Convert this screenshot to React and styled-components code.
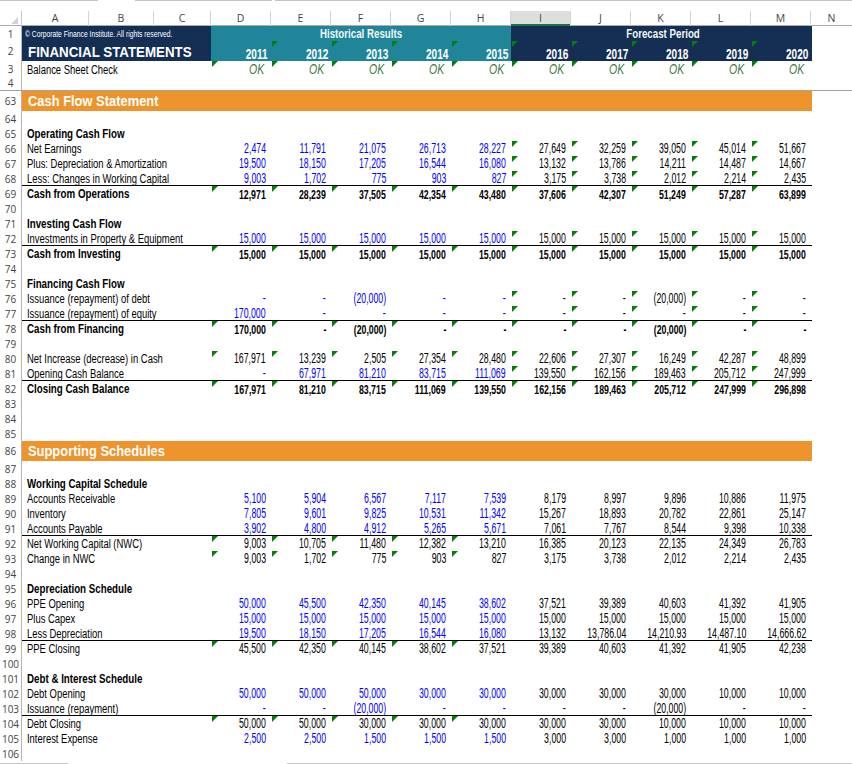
import React from 'react';
import styled, { createGlobalStyle } from 'styled-components';

const Global = createGlobalStyle`
  html, body { margin: 0; padding: 0; background: #fff; }
  body { font-family: "Liberation Sans", Arial, sans-serif; color: #000; overflow: hidden; }
`;

const NAVY = '#142e54';
const TEAL = '#21859a';
const ORANGE = '#ee942c';

const Sheet = styled.div`
  width: 852px;
  height: 764px;
  overflow: hidden;
  display: flex;
  flex-direction: column;
`;
const TopStrip = styled.div`
  height: 11px;
  display: flex;
  align-items: flex-start;
`;
const Tab = styled.div`
  height: 1px;
  background: #c4c4c4;
  width: ${p => p.$w}px;
  margin-left: ${p => p.$gap || 0}px;
`;
const BottomStrip = styled.div`
  height: 3px;
  display: flex;
  align-items: flex-end;
`;
const ColHeader = styled.div`
  height: 15px;
  display: grid;
  grid-template-columns: 22px 67px 65px 57px repeat(10, 60px) 41px;
  border-bottom: 1px solid #ababab;
  box-sizing: border-box;
`;
const Corner = styled.div`
  border-right: 1px solid #c6c6c6;
  display: flex;
  align-items: flex-end;
  justify-content: flex-end;
  padding: 0 3px 2px 0;
`;
const ColCell = styled.div`
  border-right: ${p => (p.$last ? 'none' : '1px solid #d4d4d4')};
  font: 10.5px "Open Sans", sans-serif;
  line-height: 15px;
  color: #444;
  text-align: center;
  background: ${p => (p.$active ? '#dedede' : 'transparent')};
  box-shadow: ${p => (p.$active ? 'inset 0 -2px 0 #217346' : 'none')};
`;
const Row = styled.div`
  display: flex;
  height: ${p => p.$h || 15}px;
  flex: none;
  box-sizing: border-box;
  border-bottom: ${p => (p.$frozen ? '1px solid #a2a2a2' : 'none')};
`;
const RowNum = styled.div`
  width: 22px;
  flex: none;
  box-sizing: border-box;
  border-right: 1px solid #b4b4b4;
  font: 10px "Open Sans", sans-serif;
  color: #444;
  text-align: center;
  display: flex;
  align-items: center;
  justify-content: center;
`;
const Body = styled.div`
  width: 790px;
  flex: none;
  box-sizing: border-box;
  display: grid;
  grid-template-columns: 189px repeat(10, 60px) 1px;
  background: ${p => p.$bg || 'transparent'};
  box-shadow: ${p => (p.$rule ? 'inset 0 -1px 0 #000' : 'none')};
`;
const LabelCell = styled.div`
  position: relative;
  padding-left: ${p => p.$pad || 5}px;
  display: flex;
  align-items: center;
  background: ${p => p.$bg || 'transparent'};
  white-space: nowrap;
`;
const ValueCell = styled.div`
  position: relative;
  display: flex;
  justify-content: flex-end;
  align-items: center;
  padding-right: ${p => p.$pad || 5}px;
  background: ${p => p.$bg || 'transparent'};
  white-space: nowrap;
`;
const BandCell = styled.div`
  grid-column: span 5;
  background: ${p => p.$bg};
  display: flex;
  align-items: center;
  justify-content: center;
  padding-left: ${p => p.$shift || 0}px;
  box-sizing: border-box;
`;
const Squeeze = styled.span`
  display: inline-block;
  transform: scaleX(var(--sx));
`;
const LabelText = styled(Squeeze)`
  --sx: ${p => (p.$bold ? 0.78 : 0.755)};
  transform-origin: left center;
  font-size: 12.5px;
  font-weight: ${p => (p.$bold ? 700 : 400)};
  line-height: 15px;
  position: relative;
  top: 1px;
`;
const NumText = styled(Squeeze)`
  --sx: ${p => (p.$bold ? 0.675 : 0.627)};
  transform-origin: right center;
  font-size: ${p => (p.$bold ? 13 : 14)}px;
  font-weight: ${p => (p.$bold ? 700 : 400)};
  color: ${p => (p.$blue ? '#0000ff' : '#000')};
  line-height: 15px;
  position: relative;
  top: ${p => (p.$bold ? 1 : 0)}px;
`;
const OkText = styled(Squeeze)`
  --sx: 0.75;
  transform-origin: right center;
  font-size: 14px;
  font-style: italic;
  color: #3f7a45;
`;
const YearText = styled(Squeeze)`
  --sx: 0.67;
  transform-origin: right center;
  font-size: 15px;
  font-weight: 700;
  color: #fff;
  position: relative;
  top: 2px;
`;
const BandText = styled(Squeeze)`
  --sx: 0.72;
  transform-origin: center center;
  font-size: 13.5px;
  font-weight: 700;
  color: #f2f6f8;
`;
const CopyText = styled(Squeeze)`
  --sx: 0.71;
  transform-origin: left center;
  font-size: 9.5px;
  color: #fff;
`;
const TitleText = styled(Squeeze)`
  --sx: 0.86;
  transform-origin: left center;
  font-size: 15.5px;
  font-weight: 700;
  color: #fff;
  position: relative;
  top: 1px;
`;
const SectionText = styled(Squeeze)`
  --sx: 0.89;
  transform-origin: left center;
  font-size: 14.5px;
  font-weight: 700;
  color: #fff;
`;
const Flag = styled.svg`
  position: absolute;
  left: 1px;
  top: 0;
  width: 6px;
  height: 6px;
  display: block;
`;

const Tri = () => (
  <Flag viewBox="0 0 6 6"><polygon points="0,0 6,0 0,6" fill="#067d0b" /></Flag>
);

const COLS = ['A', 'B', 'C', 'D', 'E', 'F', 'G', 'H', 'I', 'J', 'K', 'L', 'M', 'N'];
const R = (s) => s.split(' ');
const ALL = [0, 9];
const LATE = [5, 9];
const EARLY = [0, 4];

const top1 = [
  { n: 65, label: 'Operating Cash Flow', bold: true },
  { n: 66, label: 'Net Earnings', v: '2,474 11,791 21,075 26,713 28,227 27,649 32,259 39,050 45,014 51,667', blue: 1, tri: LATE },
  { n: 67, label: 'Plus: Depreciation & Amortization', v: '19,500 18,150 17,205 16,544 16,080 13,132 13,786 14,211 14,487 14,667', blue: 1, tri: LATE },
  { n: 68, label: 'Less: Changes in Working Capital', v: '9,003 1,702 775 903 827 3,175 3,738 2,012 2,214 2,435', blue: 1, tri: LATE, rule: 1 },
  { n: 69, label: 'Cash from Operations', bold: true, v: '12,971 28,239 37,505 42,354 43,480 37,606 42,307 51,249 57,287 63,899', tri: ALL },
  { n: 70 },
  { n: 71, label: 'Investing Cash Flow', bold: true },
  { n: 72, label: 'Investments in Property & Equipment', v: '15,000 15,000 15,000 15,000 15,000 15,000 15,000 15,000 15,000 15,000', blue: 1, tri: LATE, rule: 1 },
  { n: 73, label: 'Cash from Investing', bold: true, v: '15,000 15,000 15,000 15,000 15,000 15,000 15,000 15,000 15,000 15,000', tri: ALL },
  { n: 74 },
  { n: 75, label: 'Financing Cash Flow', bold: true },
  { n: 76, label: 'Issuance (repayment) of debt', v: '- - (20,000) - - - - (20,000) - -', blue: 1, tri: LATE },
  { n: 77, label: 'Issuance (repayment) of equity', v: '170,000 - - - - - - - - -', blue: 1, tri: LATE, rule: 1 },
  { n: 78, label: 'Cash from Financing', bold: true, v: '170,000 - (20,000) - - - - (20,000) - -', tri: ALL },
  { n: 79 },
  { n: 80, label: 'Net Increase (decrease) in Cash', v: '167,971 13,239 2,505 27,354 28,480 22,606 27,307 16,249 42,287 48,899', tri: ALL },
  { n: 81, label: 'Opening Cash Balance', v: '- 67,971 81,210 83,715 111,069 139,550 162,156 189,463 205,712 247,999', blue: 1, tri: LATE, rule: 1 },
  { n: 82, label: 'Closing Cash Balance', bold: true, v: '167,971 81,210 83,715 111,069 139,550 162,156 189,463 205,712 247,999 296,898', tri: ALL },
  { n: 83 }, { n: 84 }, { n: 85 },
];
const bottom = [
  { n: 87 },
  { n: 88, label: 'Working Capital Schedule', bold: true },
  { n: 89, label: 'Accounts Receivable', v: '5,100 5,904 6,567 7,117 7,539 8,179 8,997 9,896 10,886 11,975', blue: 1 },
  { n: 90, label: 'Inventory', v: '7,805 9,601 9,825 10,531 11,342 15,267 18,893 20,782 22,861 25,147', blue: 1 },
  { n: 91, label: 'Accounts Payable', v: '3,902 4,800 4,912 5,265 5,671 7,061 7,767 8,544 9,398 10,338', blue: 1, rule: 1 },
  { n: 92, label: 'Net Working Capital (NWC)', v: '9,003 10,705 11,480 12,382 13,210 16,385 20,123 22,135 24,349 26,783', tri: EARLY },
  { n: 93, label: 'Change in NWC', v: '9,003 1,702 775 903 827 3,175 3,738 2,012 2,214 2,435', tri: EARLY },
  { n: 94 },
  { n: 95, label: 'Depreciation Schedule', bold: true },
  { n: 96, label: 'PPE Opening', v: '50,000 45,500 42,350 40,145 38,602 37,521 39,389 40,603 41,392 41,905', blue: 1 },
  { n: 97, label: 'Plus Capex', v: '15,000 15,000 15,000 15,000 15,000 15,000 15,000 15,000 15,000 15,000', blue: 1 },
  { n: 98, label: 'Less Depreciation', v: '19,500 18,150 17,205 16,544 16,080 13,132 13,786.04 14,210.93 14,487.10 14,666.62', blue: 1, rule: 1 },
  { n: 99, label: 'PPE Closing', v: '45,500 42,350 40,145 38,602 37,521 39,389 40,603 41,392 41,905 42,238', tri: EARLY },
  { n: 100 },
  { n: 101, label: 'Debt & Interest Schedule', bold: true },
  { n: 102, label: 'Debt Opening', v: '50,000 50,000 50,000 30,000 30,000 30,000 30,000 30,000 10,000 10,000', blue: 1 },
  { n: 103, label: 'Issuance (repayment)', v: '- - (20,000) - - - - (20,000) - -', blue: 1, rule: 1 },
  { n: 104, label: 'Debt Closing', v: '50,000 50,000 30,000 30,000 30,000 30,000 30,000 10,000 10,000 10,000', tri: EARLY },
  { n: 105, label: 'Interest Expense', v: '2,500 2,500 1,500 1,500 1,500 3,000 3,000 1,000 1,000 1,000', blue: 1 },
  { n: 106 },
];

const hasTri = (tri, i) => tri && i >= tri[0] && i <= tri[1];

const DataRow = ({ row }) => {
  const values = row.v ? R(row.v) : null;
  return (
    <Row>
      <RowNum>{row.n}</RowNum>
      <Body $rule={row.rule}>
        <LabelCell>{row.label && <LabelText $bold={row.bold}>{row.label}</LabelText>}</LabelCell>
        {values && values.map((val, i) => (
          <ValueCell key={i}>
            {hasTri(row.tri, i) && <Tri />}
            <NumText $bold={row.bold} $blue={row.blue && i < 5}>{val}</NumText>
          </ValueCell>
        ))}
      </Body>
    </Row>
  );
};

const SectionRow = ({ n, title }) => (
  <Row $h={20}>
    <RowNum>{n}</RowNum>
    <Body $bg={ORANGE}>
      <LabelCell $pad={6}><SectionText>{title}</SectionText></LabelCell>
    </Body>
  </Row>
);

export default function App() {
  const years = [2011, 2012, 2013, 2014, 2015, 2016, 2017, 2018, 2019, 2020];
  return (
    <Sheet>
      <Global />
      <TopStrip>
        <Tab $w={98} /><Tab $w={137} $gap={37} /><Tab $w={577} $gap={3} />
      </TopStrip>
      <ColHeader>
        <Corner>
          <svg width="7" height="7" viewBox="0 0 7 7"><polygon points="7,0 7,7 0,7" fill="#d2d2d2" /></svg>
        </Corner>
        {COLS.map((c) => <ColCell key={c} $active={c === 'I'} $last={c === 'N'}>{c}</ColCell>)}
      </ColHeader>

      <Row>
        <RowNum>1</RowNum>
        <Body $bg={NAVY}>
          <LabelCell $pad={3} $bg={NAVY}><CopyText>© Corporate Finance Institute. All rights reserved.</CopyText></LabelCell>
          <BandCell $bg={TEAL}><BandText>Historical Results</BandText></BandCell>
          <BandCell $bg={NAVY} $shift={4}><BandText>Forecast Period</BandText></BandCell>
        </Body>
      </Row>
      <Row $h={20}>
        <RowNum>2</RowNum>
        <Body $bg={NAVY}>
          <LabelCell $pad={6} $bg={NAVY}><TitleText>FINANCIAL STATEMENTS</TitleText></LabelCell>
          {years.map((y, i) => (
            <ValueCell key={y} $pad={3} $bg={i < 5 ? TEAL : NAVY}>
              {i > 0 && <Tri />}
              <YearText>{y}</YearText>
            </ValueCell>
          ))}
        </Body>
      </Row>
      <Row>
        <RowNum>3</RowNum>
        <Body>
          <LabelCell><LabelText>Balance Sheet Check</LabelText></LabelCell>
          {years.map((y) => (
            <ValueCell key={y} $pad={7}><Tri /><OkText>OK</OkText></ValueCell>
          ))}
        </Body>
      </Row>
      <Row $frozen>
        <RowNum>4</RowNum>
      </Row>

      <SectionRow n={63} title="Cash Flow Statement" />
      <DataRow row={{ n: 64 }} />
      {top1.map((r) => <DataRow key={r.n} row={r} />)}

      <SectionRow n={86} title="Supporting Schedules" />
      {bottom.map((r) => <DataRow key={r.n} row={r} />)}

      <BottomStrip>
        <Tab $w={68} /><Tab $w={565} $gap={219} />
      </BottomStrip>
    </Sheet>
  );
}
